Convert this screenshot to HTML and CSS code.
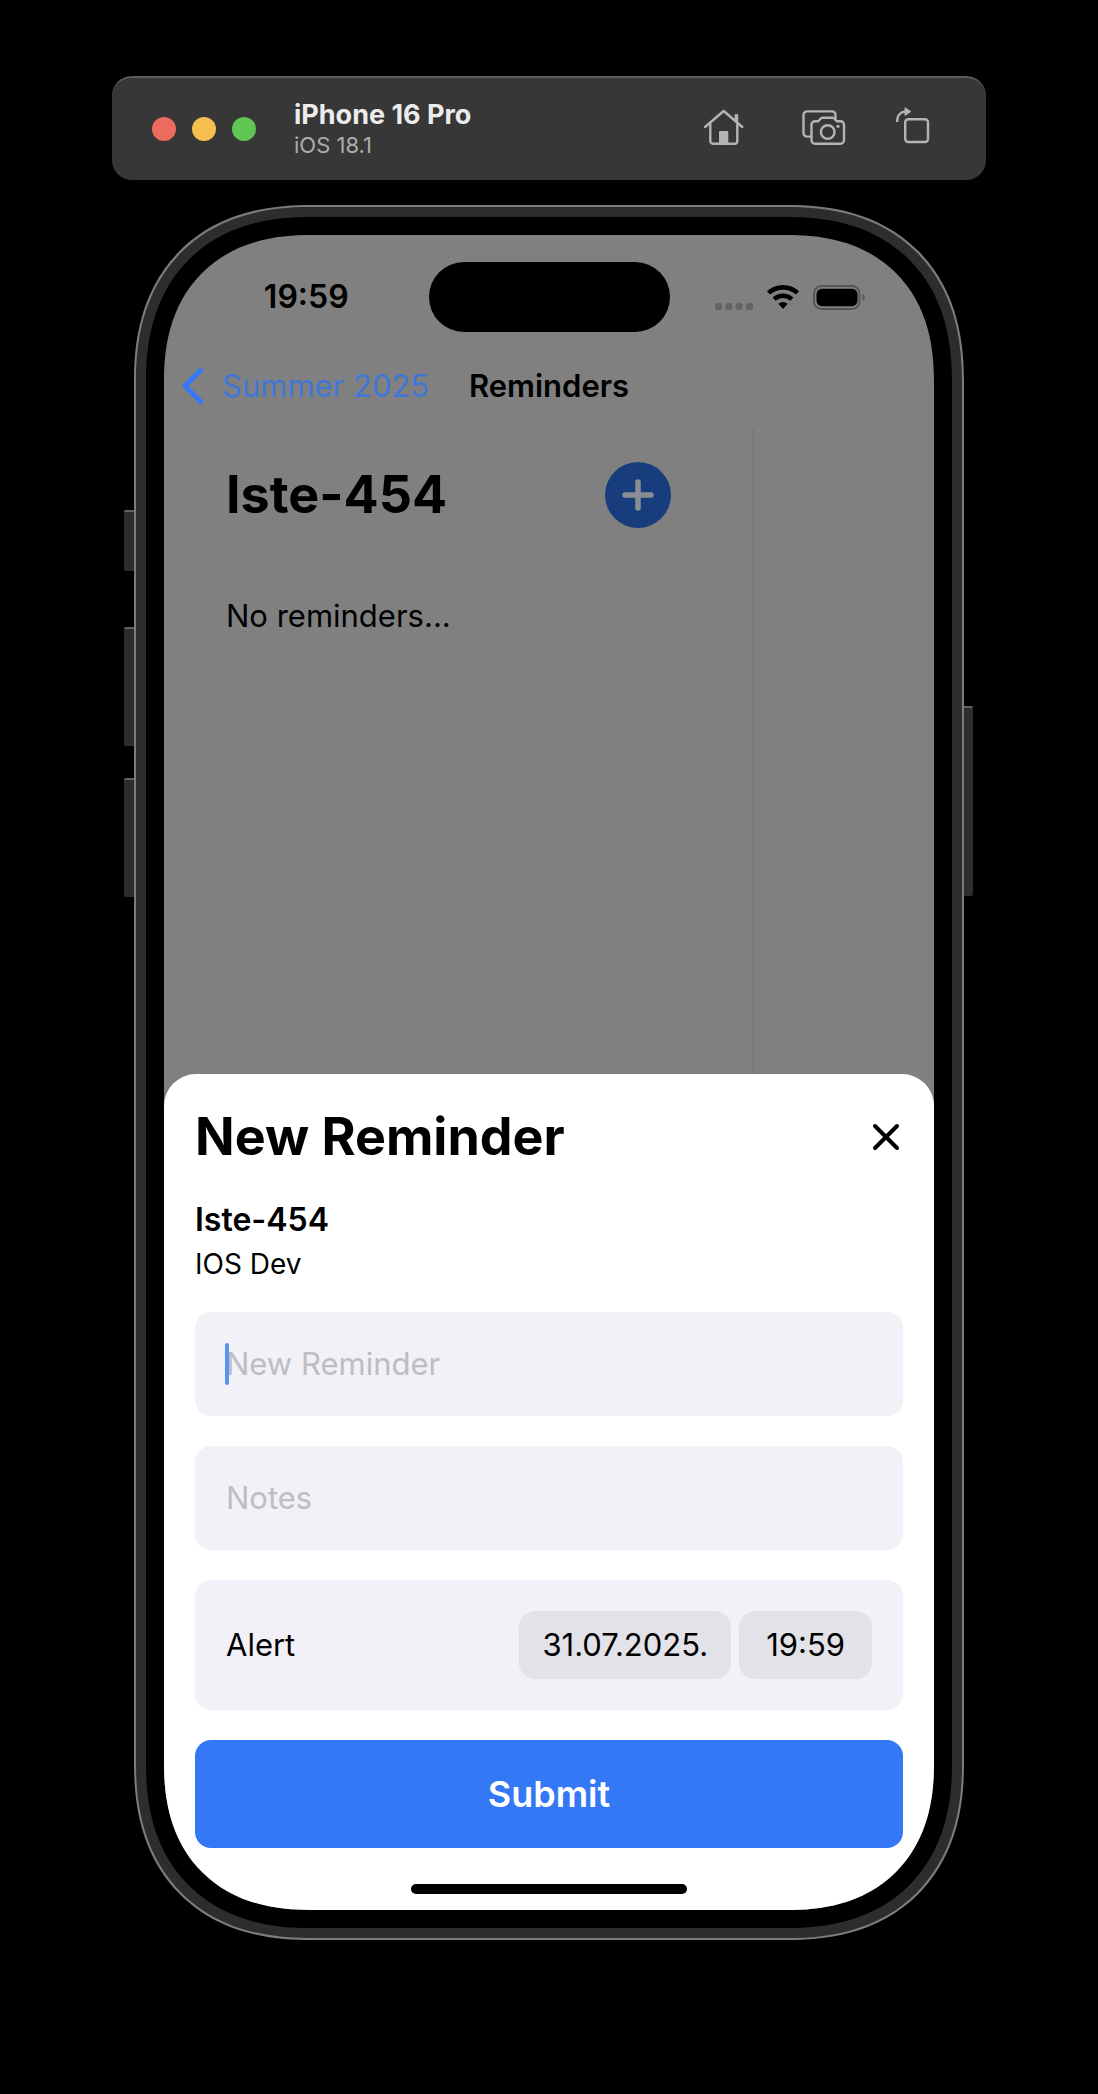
FILE: index.html
```html
<!DOCTYPE html>
<html lang="en">
<head>
<meta charset="utf-8">
<meta name="viewport" content="width=device-width, initial-scale=1">
<title>Reminders</title>
<link rel="stylesheet" href="styles.css">
</head>
<body>
<main class="stage">
  <header class="toolbar">
    <div class="lights">
      <button class="light light-close" type="button" aria-label="Close window"></button>
      <button class="light light-min" type="button" aria-label="Minimize window"></button>
      <button class="light light-max" type="button" aria-label="Maximize window"></button>
    </div>
    <div class="device">
      <p class="device-name">iPhone 16 Pro</p>
      <p class="device-os">iOS 18.1</p>
    </div>
    <div class="tools">
      <button class="tool" type="button" aria-label="Home">
        <svg width="48" height="44" viewBox="0 0 48 44" fill="none" stroke="currentColor" stroke-width="2.4" stroke-linecap="round" stroke-linejoin="round">
          <path d="M3 20 21.7 4 40.3 20M8.3 16v18a2.7 2.7 0 0 0 2.7 2.7h21.6a2.7 2.7 0 0 0 2.7-2.7V16"/>
          <path d="M32.6 7.2h3.6v9.4l-3.6-3z" fill="currentColor" stroke="none"/>
          <path d="M17 36.5V25a1 1 0 0 1 1-1h7.300a1 1 0 0 1 1 1v11.500z" fill="currentColor" stroke="none"/>
        </svg>
      </button>
      <button class="tool" type="button" aria-label="Screenshot">
        <svg width="44" height="44" viewBox="0 0 44 44" fill="none" stroke="currentColor" stroke-width="2.400" stroke-linejoin="round">
          <path d="M10 29.600H6a3.500 3.500 0 0 1-3.500-3.500V8A3.500 3.500 0 0 1 6 4.400h25A3.500 3.500 0 0 1 34.500 8v4.500"/>
          <path d="M10.500 17.800a3.500 3.500 0 0 1 3.500-3.500h3.200l2.600-2.800a2.500 2.500 0 0 1 1.800-.8h9.800a2.500 2.500 0 0 1 1.800.8l2.600 2.800h3.700a3.500 3.500 0 0 1 3.500 3.500v15.500a3.500 3.500 0 0 1-3.500 3.500H14a3.500 3.500 0 0 1-3.500-3.500z"/>
          <circle cx="26.700" cy="25" r="6.800"/>
          <circle cx="37" cy="19.300" r="1.600" fill="currentColor" stroke="none"/>
        </svg>
      </button>
      <button class="tool" type="button" aria-label="Rotate">
        <svg width="34" height="44" viewBox="0 0 34 44" fill="none" stroke="currentColor" stroke-width="2.400">
          <rect x="9.200" y="12.200" width="22.800" height="22.800" rx="3"/>
          <path d="M1.200 15v-2a8.500 8.500 0 0 1 8.500-8.500"/>
          <path d="M9 .8v7.600L14.800 4.600z" fill="currentColor" stroke-width="1" stroke-linejoin="round"/>
        </svg>
      </button>
    </div>
  </header>

  <div class="phone">
    <span class="key key-action"></span>
    <span class="key key-up"></span>
    <span class="key key-down"></span>
    <span class="key key-power"></span>
    <div class="bezel">
      <div class="screen">
        <div class="status">
          <span class="clock">19:59</span>
          <span class="island"></span>
          <span class="signals">
            <svg width="38" height="7" viewBox="0 0 38 7" fill="#636363">
              <rect width="7" height="7" rx="2.500"/><rect x="10.300" width="7" height="7" rx="2.500"/><rect x="20.600" width="7" height="7" rx="2.500"/><rect x="31" width="7" height="7" rx="2.500"/>
            </svg>
            <svg width="32" height="25" viewBox="0 0 32 25" fill="none" stroke="#000" stroke-width="4.600">
              <path d="M1.500 7.900a21.700 21.700 0 0 1 29 0M7.100 14.100a13.300 13.300 0 0 1 17.800 0"/>
              <path d="M16 24l-4.700-5.200a7 7 0 0 1 9.400 0z" fill="#000" stroke="none"/>
            </svg>
            <svg width="53" height="25" viewBox="0 0 53 25">
              <rect x="1" y="1" width="45.500" height="23" rx="7.500" fill="none" stroke="#565656" stroke-width="2"/>
              <rect x="3.500" y="3.700" width="41" height="17.500" rx="5.500"/>
              <path d="M49.500 8.700c3 1.200 3 6 0 7.400z" fill="#565656"/>
            </svg>
          </span>
        </div>

        <nav class="nav">
          <a class="back" href="#">
            <svg width="22" height="38" viewBox="0 0 22 38" fill="none" stroke="#3478f6" stroke-width="5" stroke-linecap="round" stroke-linejoin="round"><path d="M18.500 3.500 3 19l15.500 15.500"/></svg>
            <span>Summer 2025</span>
          </a>
          <h1 class="nav-title">Reminders</h1>
        </nav>

        <div class="board">
          <section class="course">
            <div class="course-head">
              <h2 class="heading">Iste-454</h2>
              <button class="add" type="button" aria-label="Add reminder">
                <svg width="32" height="32" viewBox="0 0 32 32" fill="none" stroke="currentColor" stroke-width="5.500" stroke-linecap="round"><path d="M16 3v26M3 16h26"/></svg>
              </button>
            </div>
            <p class="empty">No reminders...</p>
          </section>
        </div>

        <form class="sheet">
          <div class="sheet-head">
            <h2 class="heading">New Reminder</h2>
            <button class="close" type="button" aria-label="Close">
              <svg width="34" height="34" viewBox="0 0 34 34" fill="none" stroke="currentColor" stroke-width="4" stroke-linecap="round"><path d="M6 6l22 22M28 6 6 28"/></svg>
            </button>
          </div>
          <div class="subject">
            <p class="subject-name">Iste-454</p>
            <p class="subject-desc">IOS Dev</p>
          </div>
          <div class="fields">
            <div class="field field-active"><input class="input" type="text" placeholder="New Reminder" aria-label="New Reminder"></div>
            <div class="field"><input class="input" type="text" placeholder="Notes" aria-label="Notes"></div>
            <div class="alert">
              <label class="alert-label" for="alert-date">Alert</label>
              <button class="pill pill-date" id="alert-date" type="button">31.07.2025.</button>
              <button class="pill pill-time" type="button">19:59</button>
            </div>
            <button class="submit" type="submit">Submit</button>
          </div>
          <span class="home-bar"></span>
        </form>
      </div>
    </div>
  </div>
</main>
</body>
</html>
```
FILE: styles.css
```css
* {
  box-sizing: border-box;
}

body {
  margin: 0;
  background: #000;
  color: #000;
  font-family: Inter, "Liberation Sans", sans-serif;
  font-size: 31px;
  line-height: 44px;
}

h1,
h2,
p {
  margin: 0;
}

button,
input {
  border: 0;
  padding: 0;
  background: none;
  color: inherit;
  font: inherit;
}

svg {
  display: block;
  overflow: visible;
}

.stage {
  display: flex;
  flex-direction: column;
  gap: 25px;
  max-width: 1098px;
  margin: 0 auto;
  padding: 76px 112px 152px;
}

/* Simulator window bar */
.toolbar {
  display: flex;
  align-items: center;
  padding: 21px 56px;
  border-top: 2px solid #5c5c5c;
  border-radius: 20px;
  padding-left: 40px;
  background: #373737;
}

.lights {
  display: flex;
  gap: 16px;
  margin-right: 38px;
}

.light {
  width: 24px;
  height: 24px;
  border-radius: 50%;
}

.light-close { background: #ed6a5f; }
.light-min { background: #f5bf4f; }
.light-max { background: #61c554; }

.device-name {
  color: #ececec;
  font-size: 27px;
  font-weight: 700;
  line-height: 32px;
}

.device-os {
  color: #acacac;
  font-size: 22px;
  line-height: 28px;
}

.tools {
  display: flex;
  gap: 51px;
  margin-left: auto;
  color: #b4b4b4;
}

/* Phone body */
.phone {
  position: relative;
  margin: 0 22px;
  padding: 10px;
  border: 2px solid #7c7c7c;
  border-radius: 154px;
  background: #2d2d2d;
}

.key {
  position: absolute;
  left: -12px;
  width: 10px;
  border-top: 2px solid #626262;
  border-radius: 2px 0 0 2px;
  background: #2d2d2d;
}

.key-action { top: 303px; height: 61px; }
.key-up { top: 420px; height: 119px; }
.key-down { top: 571px; height: 119px; }

.key-power {
  top: 499px;
  right: -11px;
  left: auto;
  width: 9px;
  height: 190px;
  border-radius: 0 2px 2px 0;
}

.bezel {
  padding: 18px;
  border-radius: 142px;
  background: #000;
}

.screen {
  display: flex;
  flex-direction: column;
  aspect-ratio: 770 / 1675;
  overflow: hidden;
  border-radius: 124px;
  background: #808080;
}

@supports (corner-shape: superellipse(1.2)) {
  .phone { border-radius: 176px; corner-shape: superellipse(1.2); }
  .bezel { border-radius: 164px; corner-shape: superellipse(1.2); }
  .screen { border-radius: 146px; corner-shape: superellipse(1.2); }
}

/* Status bar */
.status {
  display: grid;
  grid-template-columns: 1fr 241px 1fr;
  align-items: center;
  padding-top: 27px;
}

.clock {
  padding-left: 20px;
  font-size: 32px;
  font-weight: 600;
  text-align: center;
}

.island {
  height: 70px;
  border-radius: 35px;
  background: #000;
}

.signals {
  display: flex;
  align-items: flex-end;
  justify-content: center;
  gap: 14px;
  padding-right: 22px;
}

/* Navigation bar */
.nav {
  display: grid;
  grid-template-columns: 1fr auto 1fr;
  align-items: center;
  padding: 32px 18px 20px;
}

.back {
  display: flex;
  align-items: center;
  gap: 18px;
  color: #3f77d8;
  text-decoration: none;
  white-space: nowrap;
}

.nav-title {
  font-size: 31px;
  font-weight: 600;
}

/* Dimmed page behind the sheet */
.board {
  display: grid;
  grid-template-columns: 23fr 7fr;
  flex: 1;
}

.course {
  padding: 34px 82px 0 62px;
  border-right: 1px solid #727272;
}

.course-head,
.sheet-head {
  display: flex;
  align-items: center;
  justify-content: space-between;
}

.heading {
  font-size: 52px;
  font-weight: 700;
  line-height: 64px;
}

.add {
  display: grid;
  place-items: center;
  width: 66px;
  height: 66px;
  border-radius: 50%;
  background: #183d7c;
  color: #8a8d94;
}

.empty {
  margin-top: 66px;
}

/* Bottom sheet */
.sheet {
  display: flex;
  flex-direction: column;
  padding: 31px 31px 16px;
  border-radius: 32px 32px 0 0;
  background: #fff;
}

.subject {
  margin: 29px 0 26px;
}

.subject-name {
  font-size: 32px;
  font-weight: 600;
}

.subject-desc {
  font-size: 28px;
}

.fields {
  display: flex;
  flex-direction: column;
  gap: 30px;
}

.field,
.alert {
  border-radius: 16px;
  background: #f2f1f7;
}

.field {
  position: relative;
  padding: 30px 31px;
}

.field-active::before {
  content: "";
  position: absolute;
  top: 31px;
  left: 30px;
  width: 4px;
  height: 42px;
  border-radius: 2px;
  background: #5a94f0;
}

.input {
  display: block;
  width: 100%;
  height: 44px;
  outline: 0;
}

.input::placeholder {
  color: #bebdc3;
  opacity: 1;
}

.alert {
  display: flex;
  align-items: center;
  gap: 8px;
  padding: 31px;
}

.alert-label {
  margin-right: auto;
}

.pill {
  border-radius: 16px;
  background: #e3e2e8;
}

.pill-date { padding: 12px 23px; }
.pill-time { padding: 12px 27px; }

.submit {
  padding: 32px;
  border-radius: 16px;
  background: #3478f6;
  color: #fff;
  font-size: 36px;
  font-weight: 600;
}

.home-bar {
  align-self: center;
  width: 276px;
  height: 10px;
  margin-top: 36px;
  border-radius: 5px;
  background: #000;
}
```
